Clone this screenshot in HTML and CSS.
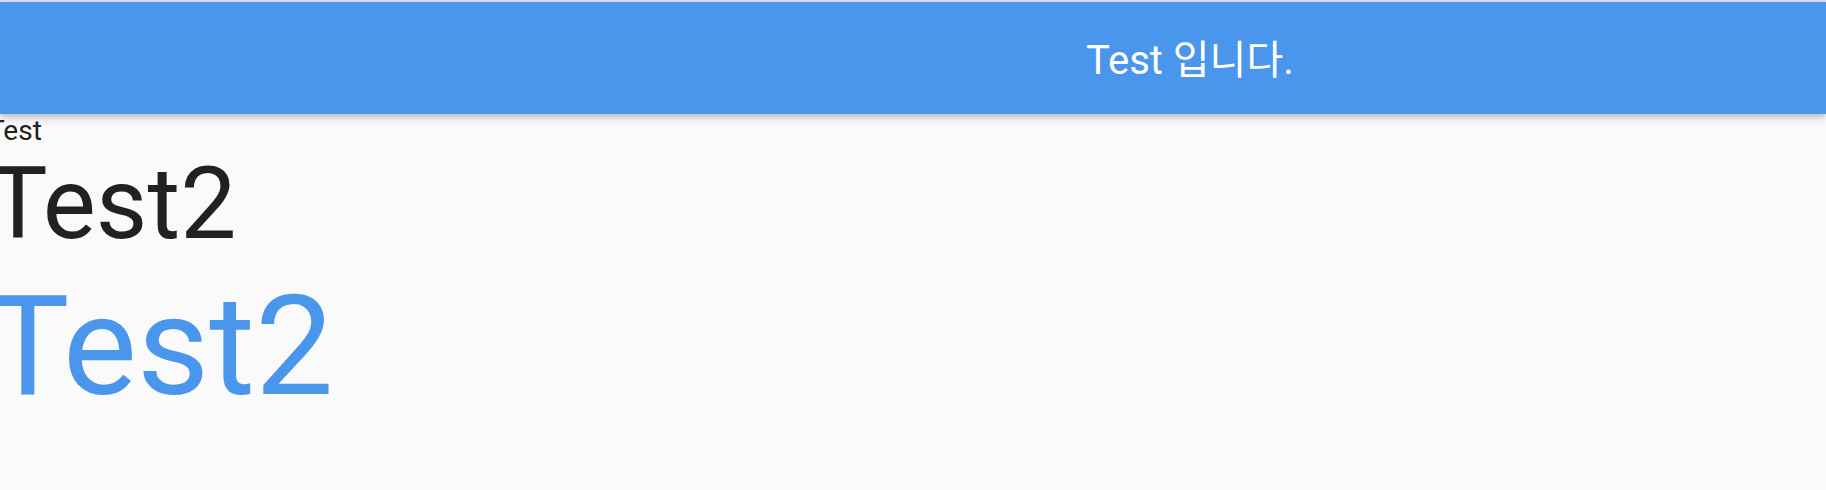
FILE: index.html
```html
<!DOCTYPE html>
<html lang="ko">
<head>
<meta charset="utf-8">
<title>Test</title>
<link rel="stylesheet" href="styles.css">
</head>
<body>
<div class="status-strip"></div>
<header class="app-bar">
  <h1 class="app-title">Test 입니다.</h1>
</header>
<main class="content">
  <p class="text-small">Test</p>
  <p class="text-large">Test2</p>
  <p class="text-huge">Test2</p>
</main>
</body>
</html>
```
FILE: styles.css
```css
html, body {
  margin: 0;
  padding: 0;
}
body {
  background: #fafafa;
  font-family: Roboto, "Noto Sans CJK KR", sans-serif;
  overflow: hidden;
  width: 1826px;
  height: 490px;
}
.status-strip {
  height: 2px;
  background: #e0e0e0;
}
.app-bar {
  position: relative;
  z-index: 1;
  height: 112px;
  background: #4a96ec;
  box-shadow: 0 4px 8px rgba(0, 0, 0, 0.18), 0 2px 4px rgba(0, 0, 0, 0.1);
  display: flex;
  align-items: center;
  padding-left: 1086px;
}
.app-title {
  margin: 0 0 2px 0;
  font-size: 40px;
  font-weight: 400;
  color: #ffffff;
}
.content {
  display: flex;
  flex-direction: column;
  align-items: flex-start;
}
.content p {
  margin: 0;
  font-weight: 400;
}
.text-small {
  font-size: 28px;
  color: #212121;
  margin-left: -12px !important;
}
.text-large {
  font-size: 100px;
  color: #212121;
  margin: -2px 0 2px -12px !important;
}
.text-huge {
  font-size: 140px;
  color: #4a96ec;
  margin-left: -14px !important;
}
```
